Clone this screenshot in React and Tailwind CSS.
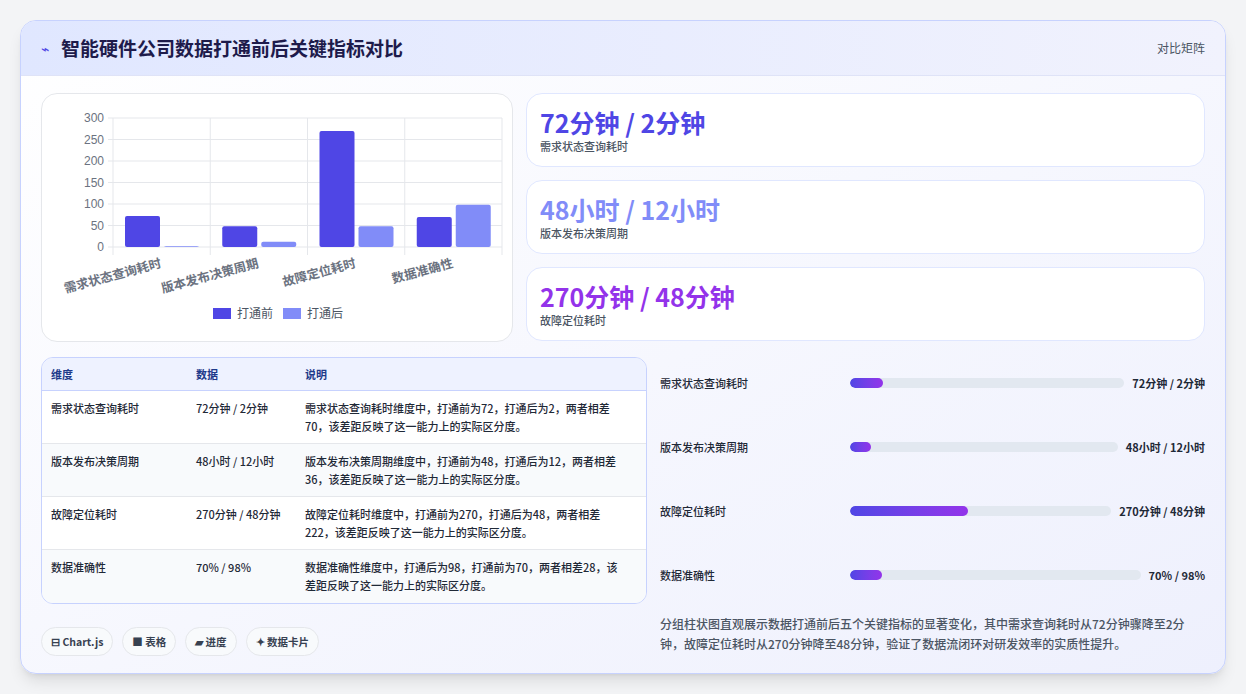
const F = { fontFamily: '"Noto Sans CJK SC","Noto Sans",sans-serif' };

function Chart() {
  const x0 = 71, x1 = 460, yTop = 22, yBot = 151;
  const ys = v => yBot - (v / 300) * (yBot - yTop);
  const data = [[72, 2, '需求状态查询耗时'], [48, 12, '版本发布决策周期'], [270, 48, '故障定位耗时'], [70, 98, '数据准确性']];
  const cw = (x1 - x0) / 4;
  return (
    <svg width="470" height="246" viewBox="0 0 470 246">
      {[0, 50, 100, 150, 200, 250, 300].map(v => (
        <g key={v}>
          <line x1={x0 - 5} x2={x1} y1={ys(v)} y2={ys(v)} stroke="#e5e7eb" />
          <text x={x0 - 9} y={ys(v) + 4} textAnchor="end" fontSize="12" fill="#6b7280" fontFamily="Liberation Sans, sans-serif">{v}</text>
        </g>
      ))}
      {[0, 1, 2, 3, 4].map(i => <line key={i} x1={x0 + i * cw} x2={x0 + i * cw} y1={yTop} y2={yBot + 8} stroke="#e5e7eb" />)}
      {data.map(([a, b, l], i) => {
        const cx = x0 + i * cw;
        return (
          <g key={i}>
            <rect x={cx + 12} y={ys(a)} width="35" height={yBot - ys(a)} rx="2" fill="#4f46e5" />
            <rect x={cx + 51} y={ys(b)} width="35" height={yBot - ys(b)} rx="2" fill="#818cf8" />
            <text transform={`translate(${cx + 49},${yBot + 20}) rotate(-15)`} textAnchor="end" fontSize="12.5" fontWeight="600" fill="#6b7280" style={F}>{l}</text>
          </g>
        );
      })}
      <rect x="171" y="212" width="18" height="11" fill="#4f46e5" />
      <text x="195" y="222" fontSize="12" fill="#4b5563" style={F}>打通前</text>
      <rect x="241" y="212" width="18" height="11" fill="#818cf8" />
      <text x="265" y="222" fontSize="12" fill="#4b5563" style={F}>打通后</text>
    </svg>
  );
}

const rows = [
  ['需求状态查询耗时', '72分钟 / 2分钟', '需求状态查询耗时维度中，打通前为72，打通后为2，两者相差70，该差距反映了这一能力上的实际区分度。'],
  ['版本发布决策周期', '48小时 / 12小时', '版本发布决策周期维度中，打通前为48，打通后为12，两者相差36，该差距反映了这一能力上的实际区分度。'],
  ['故障定位耗时', '270分钟 / 48分钟', '故障定位耗时维度中，打通前为270，打通后为48，两者相差222，该差距反映了这一能力上的实际区分度。'],
  ['数据准确性', '70% / 98%', '数据准确性维度中，打通后为98，打通前为70，两者相差28，该差距反映了这一能力上的实际区分度。'],
];
const bars = [['需求状态查询耗时', '72分钟 / 2分钟', 12], ['版本发布决策周期', '48小时 / 12小时', 8], ['故障定位耗时', '270分钟 / 48分钟', 45], ['数据准确性', '70% / 98%', 11]];

export default function App() {
  return (
    <div className="w-[1246px] h-[694px] bg-[#f3f4f6] pt-5 px-5 pb-5" style={F}>
      <div className="w-[1206px] h-[654px] rounded-2xl border border-[#c7d2fe] bg-gradient-to-br from-white to-[#eef0fd] shadow-lg overflow-hidden flex flex-col">
        <div className="h-[55px] shrink-0 flex items-center justify-between px-5 bg-gradient-to-r from-[#e0e7ff] to-[#f1f2fd] border-b border-[#dfe3f7]">
          <div className="flex items-center gap-3">
            <span className="text-[#4f46e5] text-sm">⌁</span>
            <span className="text-[19px] font-bold text-[#1e1b4b]">智能硬件公司数据打通前后关键指标对比</span>
          </div>
          <span className="text-xs text-[#4b5563]">对比矩阵</span>
        </div>
        <div className="px-5 pt-[17px] flex flex-col">
          <div className="flex gap-[13px]">
            <div className="w-[472px] h-[249px] rounded-2xl bg-white border border-[#e5e7eb] pt-[2px]">
              <Chart />
            </div>
            <div className="flex-1 flex flex-col gap-[13px]">
              {[['72分钟 / 2分钟', '需求状态查询耗时', 'text-[#4f46e5]'], ['48小时 / 12小时', '版本发布决策周期', 'text-[#818cf8]'], ['270分钟 / 48分钟', '故障定位耗时', 'text-[#9333ea]']].map(([v, l, c]) => (
                <div key={l} className="h-[74px] rounded-2xl bg-white border border-[#e0e7ff] px-[13px] flex flex-col justify-center">
                  <div className={`text-[25px] leading-8 font-bold ${c}`}>{v}</div>
                  <div className="text-[11px] text-[#4b5563] font-medium">{l}</div>
                </div>
              ))}
            </div>
          </div>
          <div className="flex gap-[13px] mt-[15px]">
            <div className="w-[606px] shrink-0 flex flex-col">
              <div className="rounded-xl border border-[#c7d2fe] bg-[#f8fafc] overflow-hidden">
                <div className="flex h-[33px] items-center bg-[#eef2ff] border-b border-[#c7d2fe] text-[11px] font-bold text-[#1e3a8a]">
                  <div className="w-[154px] pl-[9px]">维度</div><div className="w-[109px]">数据</div><div className="flex-1">说明</div>
                </div>
                {rows.map((r, i) => (
                  <div key={i} className={`flex h-[53px] items-start pt-[8px] text-[11px] leading-[18px] font-medium text-[#1f2937] ${i % 2 ? 'bg-[#f8fafc]' : 'bg-white'} ${i < 3 ? 'border-b border-[#e5e7eb]' : ''}`}>
                    <div className="w-[154px] pl-[9px]">{r[0]}</div>
                    <div className="w-[109px] pr-3">{r[1]}</div>
                    <div className="flex-1 pr-[18px]">{r[2]}</div>
                  </div>
                ))}
              </div>
              <div className="flex gap-[9px] mt-[23px]">
                {['⊟ Chart.js', '■ 表格', '▰ 进度', '✦ 数据卡片'].map(t => (
                  <div key={t} className="h-[29px] px-[9px] rounded-full border border-[#e5e7eb] bg-[#f8fafc] text-[10.5px] font-bold text-[#374151] flex items-center">{t}</div>
                ))}
              </div>
            </div>
            <div className="flex-1 flex flex-col">
              <div className="flex flex-col pt-[17px] gap-[46px]">
                {bars.map(([l, v, p]) => (
                  <div key={l} className="flex items-center h-[18px]">
                    <div className="w-[190px] text-[11px] text-[#1f2937] font-medium">{l}</div>
                    <div className="flex-1 h-[10px] rounded-full bg-[#e2e8f0] overflow-hidden">
                      <div className="h-full rounded-full bg-gradient-to-r from-[#4f46e5] to-[#9333ea]" style={{ width: p + '%' }} />
                    </div>
                    <div className="ml-2 text-[11px] font-bold text-[#1f2937] whitespace-nowrap">{v}</div>
                  </div>
                ))}
              </div>
              <p className="mt-[30px] pr-[6px] text-[12px] leading-[20px] text-[#4b5563] font-medium">分组柱状图直观展示数据打通前后五个关键指标的显著变化，其中需求查询耗时从72分钟骤降至2分钟，故障定位耗时从270分钟降至48分钟，验证了数据流闭环对研发效率的实质性提升。</p>
            </div>
          </div>
        </div>
      </div>
    </div>
  );
}
